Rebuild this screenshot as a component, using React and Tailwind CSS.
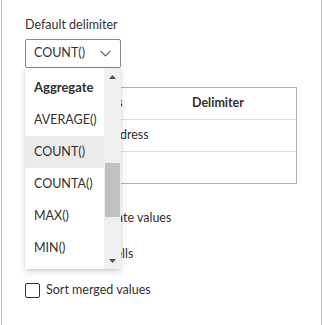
import React from 'react'

const font = { fontFamily: 'Lato, "Liberation Sans", sans-serif' }

const options = [
  { label: 'AVERAGE()' },
  { label: 'COUNT()', active: true },
  { label: 'COUNTA()' },
  { label: 'MAX()' },
  { label: 'MIN()' },
  { label: 'SUM()' },
]

function Chevron() {
  return (
    <svg width="11" height="7" viewBox="0 0 11 7" fill="none">
      <path d="M0.5 0.8 L5.5 5.8 L10.5 0.8" stroke="#605e5c" strokeWidth="1.2" />
    </svg>
  )
}

function Arrow({ down }) {
  return (
    <svg width="7" height="4" viewBox="0 0 7 4">
      <polygon points={down ? '0,0 7,0 3.5,4' : '0,4 7,4 3.5,0'} fill="#505050" />
    </svg>
  )
}

function Dropdown() {
  return (
    <div className="absolute left-0 top-full z-10 flex h-[201px] w-[96px] bg-white shadow-[0_3px_7px_rgba(0,0,0,0.13),0_0.5px_2px_rgba(0,0,0,0.11)]">
      <div className="flex-1 overflow-hidden pt-[4px]">
        <div className="flex h-[32px] items-center pl-[9px] text-[13px] font-bold text-[#323130]">Aggregate</div>
        {options.map(o => (
          <div
            key={o.label}
            className={`flex h-[32px] items-center pl-[9px] text-[12.5px] text-[#323130] ${o.active ? 'bg-[#edebe9]' : ''}`}
          >
            {o.label}
          </div>
        ))}
      </div>
      <div className="flex w-[17px] flex-col bg-[#f0f0f0]">
        <div className="flex h-[17px] items-center justify-center pt-[1px]">
          <Arrow />
        </div>
        <div className="flex-1 pt-[78px]">
          <div className="mx-[1px] h-[54px] bg-[#c1c1c1]" />
        </div>
        <div className="flex h-[17px] items-center justify-center">
          <Arrow down />
        </div>
      </div>
    </div>
  )
}

function Check({ label }) {
  return (
    <div className="flex h-[36px] items-center gap-[6px]">
      <div className="h-[15px] w-[15px] shrink-0 rounded-[2px] border border-[#323130] bg-white" />
      <span className="whitespace-nowrap text-[12.5px] text-[#323130]">{label}</span>
    </div>
  )
}

export default function App() {
  return (
    <div className="h-[325px] w-[322px] bg-white" style={font}>
      <div className="ml-[1px] h-full w-[321px] border-x border-[#c0c0c0] pl-[23px] pt-[16px]">
        <div className="mb-[5px] h-[18px] text-[12.5px] leading-[18px] text-[#323130]">Default delimiter</div>

        <div className="relative w-[96px]">
          <div className="flex h-[29px] items-center justify-between rounded-[2px] border border-[#8a8886] pl-[8px] pr-[9px]">
            <span className="text-[12.5px] text-[#323130]">COUNT()</span>
            <Chevron />
          </div>
          <Dropdown />
        </div>

        <div className="mt-[19px] w-[272px] border border-[#b3b0ad] text-[12.5px] text-[#323130]">
          <div className="flex h-[32px] items-center border-b border-[#e1dfdd] font-bold">
            <div className="w-[48px]" />
            <div className="w-[118px]">Columns</div>
            <div>Delimiter</div>
          </div>
          <div className="flex h-[32px] items-center border-b border-[#e1dfdd]">
            <div className="w-[48px]" />
            <div className="w-[118px]">Email address</div>
            <div />
          </div>
          <div className="h-[31px]" />
        </div>

        <div className="mt-[16px]">
          <Check label="Ignore duplicate values" />
          <Check label="Omit blank cells" />
          <Check label="Sort merged values" />
        </div>
      </div>
    </div>
  )
}
